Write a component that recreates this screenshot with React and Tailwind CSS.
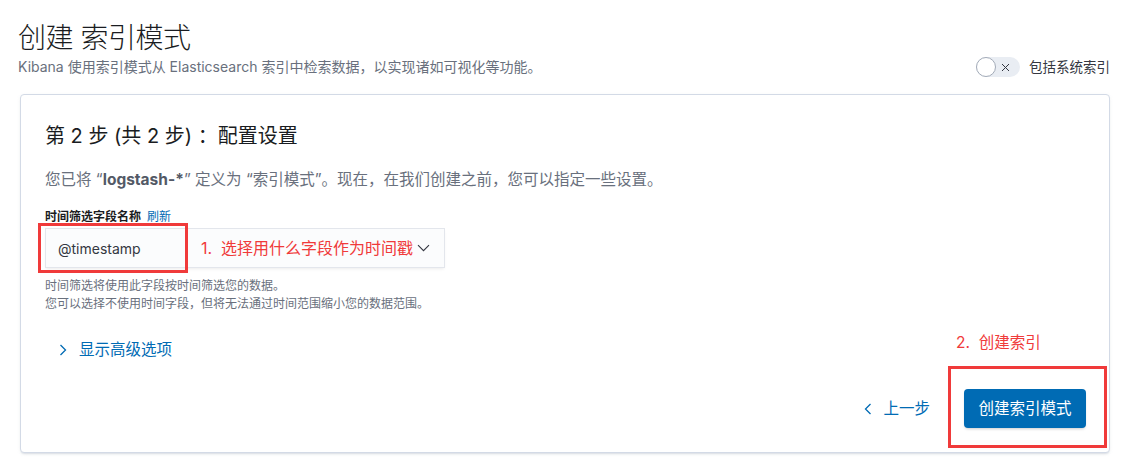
import React from "react";

const FONT = { fontFamily: 'Inter, "Noto Sans CJK SC", sans-serif' };

function ChevronRight({ className }) {
  return (
    <svg className={className} width="8" height="12" viewBox="0 0 8 12" fill="none">
      <path d="M1.5 1 L6.5 6 L1.5 11" stroke="currentColor" strokeWidth="1.3" />
    </svg>
  );
}

function ChevronLeft({ className }) {
  return (
    <svg className={className} width="8" height="12" viewBox="0 0 8 12" fill="none">
      <path d="M6.5 1 L1.5 6 L6.5 11" stroke="currentColor" strokeWidth="1.3" />
    </svg>
  );
}

export default function App() {
  return (
    <div className="w-[1128px] h-[460px] bg-white text-[#1a1c21] overflow-hidden" style={FONT}>
      <div className="flex items-end justify-between pl-[18px] pr-[18px] pt-[20px]">
        <div>
          <h1 className="text-[28px] leading-[36px] font-light tracking-[-0.5px]">创建 索引模式</h1>
          <p className="text-[14px] leading-[20px] text-[#69707d] mt-[1px]">
            Kibana 使用索引模式从 Elasticsearch 索引中检索数据，以实现诸如可视化等功能。
          </p>
        </div>
        <div className="flex items-center gap-[9px]">
          <div className="relative w-[44px] h-[20px] rounded-full bg-[#e9edf3]">
            <div className="absolute left-0 top-0 w-[20px] h-[20px] rounded-full bg-white border border-[#a3abb8]" />
            <svg className="absolute left-[25px] top-[5.5px]" width="9" height="9" viewBox="0 0 9 9">
              <path d="M1 1 L8 8 M8 1 L1 8" stroke="#343741" strokeWidth="1" />
            </svg>
          </div>
          <span className="text-[13.5px] leading-[20px] text-[#343741]">包括系统索引</span>
        </div>
      </div>

      <div className="relative ml-[20px] mt-[17px] w-[1090px] h-[359px] rounded-[4px] border border-[#d3dae6] shadow-[0_2px_2px_-1px_rgba(152,162,179,0.3),0_1px_5px_-2px_rgba(152,162,179,0.3)] bg-white">
        <div className="pl-[24px] pr-[23px] pt-[27px]">
          <h2 className="text-[20px] leading-[28px] text-[#1a1c21]">第 2 步 (共 2 步) ：配置设置</h2>
          <p className="mt-[18px] text-[15.5px] leading-[24px] text-[#69707d]">
            您已将 “<span className="font-bold text-[#535966]">logstash-*</span>” 定义为 “索引模式”。现在，在我们创建之前，您可以指定一些设置。
          </p>
          <div className="mt-[17px] flex items-center gap-[6px] text-[12px] leading-[16px]">
            <span className="font-bold text-[#1a1c21]">时间筛选字段名称</span>
            <span className="text-[#006bb4]">刷新</span>
          </div>
          <div className="mt-[3px] w-[400px] h-[40px] bg-[#fbfcfd] border border-[#e3e6ec] shadow-[0_2px_3px_-1px_rgba(0,0,0,0.08)] flex items-center justify-between pl-[12px] pr-[14px]">
            <span className="text-[14px] text-[#343741]">@timestamp</span>
            <svg width="13" height="8" viewBox="0 0 13 8" fill="none">
              <path d="M1 1.2 L6.5 6.7 L12 1.2" stroke="#343741" strokeWidth="1.1" />
            </svg>
          </div>
          <div className="mt-[9px] text-[12px] leading-[18px] text-[#69707d]">
            <div>时间筛选将使用此字段按时间筛选您的数据。</div>
            <div>您可以选择不使用时间字段，但将无法通过时间范围缩小您的数据范围。</div>
          </div>
          <div className="mt-[26px] flex items-center text-[#006bb4]">
            <ChevronRight className="ml-[14px]" />
            <span className="ml-[12px] text-[15.5px] leading-[22px]">显示高级选项</span>
          </div>
          <div className="mt-[28px] flex items-center justify-end">
            <button className="flex items-center h-[39px] text-[#006bb4] px-[2px]">
              <ChevronLeft />
              <span className="ml-[11px] text-[15.5px]">上一步</span>
            </button>
            <button className="ml-[32px] w-[122px] h-[39px] rounded-[4px] bg-[#006bb4] text-white text-[15.5px] shadow-[0_2px_3px_-1px_rgba(0,0,0,0.2)]">
              创建索引模式
            </button>
          </div>
        </div>

        {/* annotations */}
        <div className="absolute left-[17px] top-[128px] w-[150px] h-[50px] border-[3px] border-[#f03a3a]" />
        <div className="absolute left-[180px] top-[141px] text-[16px] leading-[24px] text-[#f03a3a] whitespace-nowrap">
          1.&nbsp; 选择用什么字段作为时间戳
        </div>
        <div className="absolute left-[935px] top-[237px] text-[15.5px] leading-[22px] text-[#f03a3a] whitespace-nowrap">
          2.&nbsp; 创建索引
        </div>
        <div className="absolute left-[927px] top-[271px] w-[159px] h-[82px] border-[3px] border-[#f03a3a]" />
      </div>
    </div>
  );
}
